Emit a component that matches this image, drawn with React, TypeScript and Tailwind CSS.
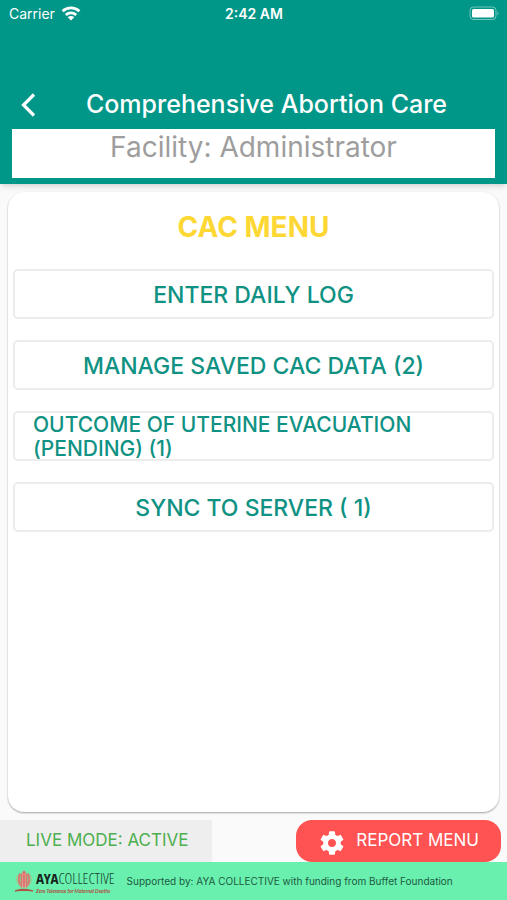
import { ReactNode } from 'react';

const menuItems = [
  { label: 'ENTER DAILY LOG' },
  { label: 'MANAGE SAVED CAC DATA (2)' },
  { label: 'OUTCOME OF UTERINE EVACUATION (PENDING) (1)', wrap: true },
  { label: 'SYNC TO SERVER ( 1)' },
];

const StatusBar = () => (
  <div className="grid h-7 grid-cols-3 items-center pr-2 pl-[9px] text-sm text-white">
    <div className="flex items-center gap-1.5">
      <span>Carrier</span>
      <svg className="h-4 w-5" viewBox="0 0 20 16" fill="none" stroke="currentColor" strokeWidth="2.8" aria-hidden="true">
        <path d="M1.6 5.2a12.2 12.2 0 0 1 16.800 0" />
        <path d="M4.800 8.900a7.500 7.500 0 0 1 10.400 0" />
        <path d="M10 14.500 6.700 11.300a4.700 4.700 0 0 1 6.600 0z" fill="currentColor" stroke="none" />
      </svg>
    </div>
    <span className="text-center font-semibold">2:42 AM</span>
    <svg className="h-4 w-8 justify-self-end" viewBox="0 0 32 16" aria-hidden="true">
      <rect x="3" y="1" width="26" height="12.500" rx="3.500" fill="none" stroke="#fff" strokeOpacity="0.45" />
      <rect x="5" y="3" width="22" height="8.500" rx="1.500" fill="#fff" />
      <path d="M30.500 5.500c1.300.6 1.300 3.200 0 3.800z" fill="#fff" fillOpacity="0.5" />
    </svg>
  </div>
);

const MenuButton = ({ children, wrap }: { children: ReactNode; wrap?: boolean }) => (
  <button
    type="button"
    className={`h-[50px] w-full rounded-[5px] border-2 border-[#ececec] bg-white px-[18px] pt-0.5 leading-6 font-medium text-[#0f9283] ${
      wrap ? 'flex items-center text-left text-[21px]' : 'text-center text-[23px]'
    }`}
  >
    {children}
  </button>
);

const Logo = () => (
  <div className="flex items-center gap-0.5">
    <svg className="h-6 w-5" viewBox="0 0 20 24" fill="none" aria-hidden="true">
      <path d="M10 1.500C7 3.500 6 9 7 13.500c.5 2.500 1.300 4 3 5.500 1.700-1.500 2.500-3 3-5.500C14 9 13 3.500 10 1.500z" fill="#d9706c" />
      <path d="M6.500 4.500C4 8 4 14.500 8.500 18M13.500 4.500C16 8 16 14.500 11.500 18" stroke="#d07f72" strokeWidth="2.400" />
      <path d="M3.500 6c-2 4-.5 9 3.500 12M16.500 6c2 4 .5 9-3.500 12" stroke="#b5b98d" strokeWidth="1" />
      <path d="M8.700 4v15M11.300 4v15" stroke="#f0b3a4" strokeWidth="0.700" />
      <path d="M1 22c5-2.400 12-2.400 18 0-6-.7-12-.7-18 0z" fill="#b5483f" stroke="#b5483f" strokeWidth="0.900" />
    </svg>
    <div className="whitespace-nowrap">
      <p className="font-['Open_Sans_Condensed','Roboto_Condensed',Lato,sans-serif] text-[15px] leading-5 text-[#17231d]">
        <b>AYA</b>
        <span className="font-['Open_Sans_Condensed_Light','Open_Sans_Condensed',sans-serif] font-light text-[#17402e]">
          COLLECTIVE
        </span>
      </p>
      <p className="font-[Lato,sans-serif] text-[5px] leading-[6px] font-bold text-[#b04a40] italic">
        Zero Tolerance for Maternal Deaths
      </p>
    </div>
  </div>
);

const App = () => {
  return (
    <div className="flex min-h-screen flex-col bg-[#fafafa] font-['Inter',sans-serif]">
      <header className="relative bg-[#009688] pb-1.5 shadow-md">
        <StatusBar />
        <div className="mt-[53px] flex h-12 items-center pl-4">
          <button type="button" aria-label="Back" className="flex h-8 w-6 items-center justify-center text-white">
            <svg className="h-6 w-4" viewBox="0 0 16 24" fill="none" stroke="currentColor" strokeWidth="3.200">
              <path d="M14 1.500 3.500 12 14 22.500" />
            </svg>
          </button>
          <h1 className="flex-1 pr-10 pl-[26px] text-center text-[25px] font-medium whitespace-nowrap text-white">
            Comprehensive Abortion Care
          </h1>
        </div>
        <div className="mx-3 h-[49px] bg-white text-center text-[28px] leading-9 text-[#9e9e9e]">
          Facility: Administrator
        </div>
      </header>

      <main className="m-2 flex-1 rounded-2xl bg-white px-[5px] pt-4 shadow-[0_1px_2px_rgba(0,0,0,0.35)]">
        <h2 className="text-center text-[28px] leading-[38px] font-bold text-[#fdd835]">CAC MENU</h2>
        <div className="mt-[23px] flex flex-col gap-[21px]">
          {menuItems.map((item) => (
            <MenuButton key={item.label} wrap={item.wrap}>
              {item.label}
            </MenuButton>
          ))}
        </div>
      </main>

      {/* Mode indicator and report button */}
      <div className="flex h-[42px] items-stretch justify-between pr-1.5">
        <div className="flex items-center bg-[#eeeeee] pr-6 pl-[26px] text-[17px] text-[#4caf50]">LIVE MODE: ACTIVE</div>
        <button
          type="button"
          className="flex items-center gap-2.5 rounded-2xl bg-[#ff5252] px-[22px] text-[17px] text-white"
        >
          <svg className="mt-1 h-7 w-7" viewBox="0 0 24 24" fill="currentColor" aria-hidden="true">
            <path d="M19.430 12.980c.04-.32.07-.64.07-.98s-.03-.66-.07-.98l2.110-1.650c.19-.15.24-.42.12-.64l-2-3.460c-.12-.22-.39-.3-.61-.22l-2.490 1c-.52-.4-1.080-.73-1.690-.98l-.38-2.650C14.460 2.180 14.250 2 14 2h-4c-.25 0-.46.18-.49.42l-.38 2.650c-.61.25-1.170.59-1.690.98l-2.490-1c-.23-.09-.49 0-.61.22l-2 3.460c-.13.22-.07.49.12.64l2.110 1.650c-.04.32-.07.65-.07.98s.03.66.07.98l-2.110 1.650c-.19.15-.24.42-.12.64l2 3.460c.12.22.39.3.61.22l2.490-1c.52.4 1.080.73 1.690.98l.38 2.650c.03.24.24.42.49.42h4c.25 0 .46-.18.49-.42l.38-2.650c.61-.25 1.170-.59 1.690-.98l2.490 1c.23.09.49 0 .61-.22l2-3.460c.12-.22.07-.49-.12-.64l-2.110-1.650zM12 15.500c-1.930 0-3.500-1.570-3.500-3.500s1.570-3.500 3.500-3.500 3.500 1.570 3.500 3.500-1.570 3.500-3.500 3.500z" />
          </svg>
          REPORT MENU
        </button>
      </div>

      <footer className="flex h-[38px] items-center gap-3 bg-[#69f0ae] pl-3.5 text-[#1c5a41]">
        <Logo />
        <p className="text-[10px]">Supported by: AYA COLLECTIVE with funding from Buffet Foundation</p>
      </footer>
    </div>
  );
};

export default App;
